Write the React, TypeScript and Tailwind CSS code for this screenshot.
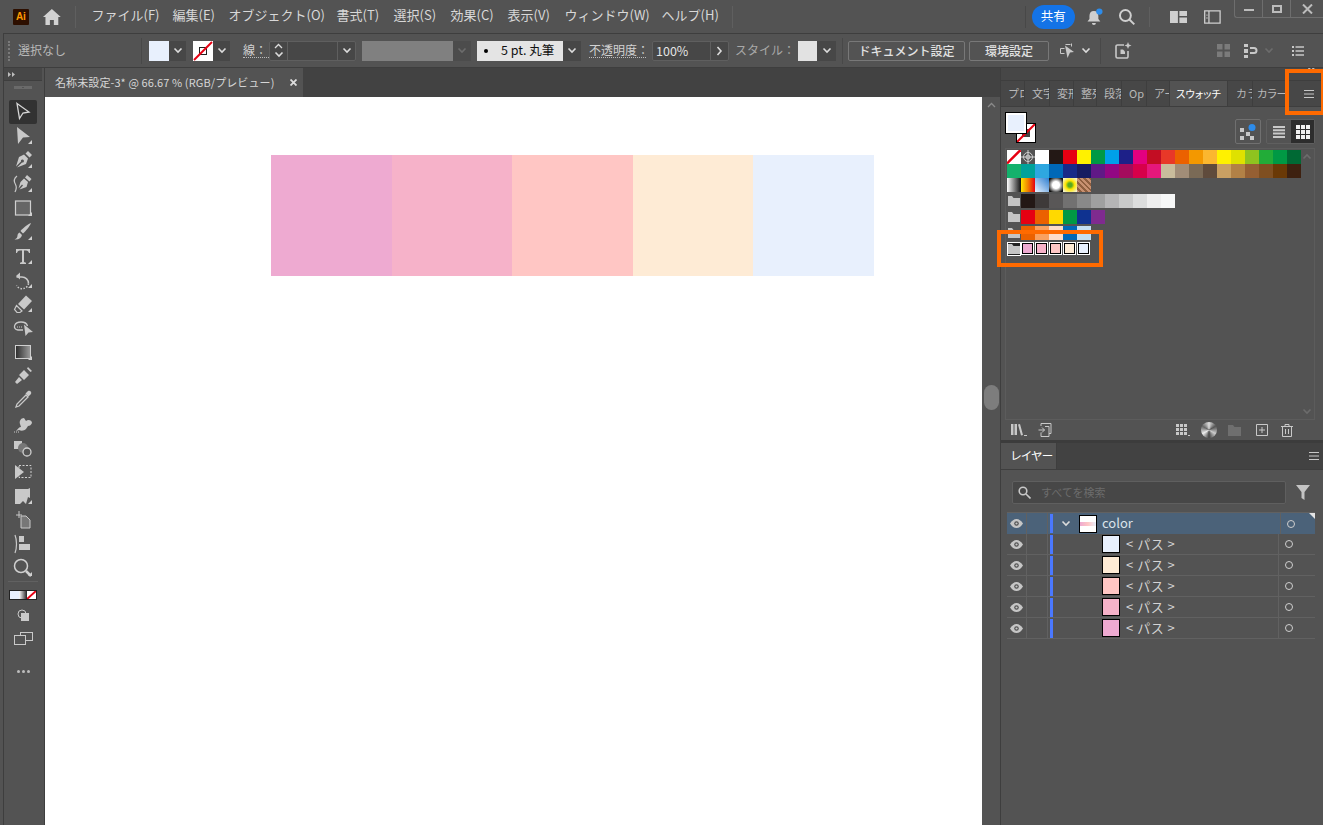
import React from 'react';

const FONT = "font-['Noto_Sans_CJK_JP','Noto_Sans',sans-serif]";

const MENU = [
  { label: 'ファイル(F)', cls: 'w-[81px]' },
  { label: '編集(E)', cls: 'w-[56px]' },
  { label: 'オブジェクト(O)', cls: 'w-[108px]' },
  { label: '書式(T)', cls: 'w-[57px]' },
  { label: '選択(S)', cls: 'w-[57px]' },
  { label: '効果(C)', cls: 'w-[57px]' },
  { label: '表示(V)', cls: 'w-[57px]' },
  { label: 'ウィンドウ(W)', cls: 'w-[97px]' },
  { label: 'ヘルプ(H)', cls: 'w-[70px]' },
];

const TABS = [
  { label: 'プロ', cls: 'w-[24px]' },
  { label: '文字', cls: 'w-[25px]' },
  { label: '変形', cls: 'w-[24px]' },
  { label: '整列', cls: 'w-[23px]' },
  { label: '段落', cls: 'w-[25px]' },
  { label: 'Op', cls: 'w-[25px]' },
  { label: 'アー', cls: 'w-[23px]' },
];

const ROW1 = ['#ffffff', '#231815', '#e60012', '#fff100', '#009944', '#00a0e9', '#1d2088', '#e4007f', '#c30d23', '#e83828', '#eb6100', '#f39800', '#fbb72f', '#fff100', '#dfe100', '#8fc31f', '#22ac38', '#009944', '#006934'];
const ROW2 = ['#14b16c', '#00a29a', '#2ea7e0', '#0068b7', '#172a88', '#171c61', '#601986', '#920783', '#a40b5d', '#d7004a', '#e5177b', '#c9bc9c', '#a18d78', '#7a6a56', '#5f4b3c', '#c9a063', '#b28146', '#955f33', '#7f4f21', '#6a3906', '#3e2110'];
const GRAYS = ['#231815', '#3e3a39', '#595757', '#727171', '#898989', '#9fa0a0', '#b5b5b6', '#c9caca', '#dcdddd', '#efefef', '#f7f8f8'];
const BRIGHTS = ['#e60012', '#eb6100', '#ffd900', '#009944', '#0f3290', '#7f2b8f'];
const TINTS = ['#eb6100', '#f9a05f', '#fddcc8', '#0068b7', '#c4dff2'];
const PALETTE = ['#eeaad1', '#f6b2c9', '#ffc6c4', '#feebd5', '#e8f0fd'];
const LAYERS = ['#e8f0fd', '#feebd5', '#ffc6c4', '#f6b2c9', '#eeaad1'];

const Chevron = ({ dim = false }: { dim?: boolean }) => (
  <svg width="10" height="7" viewBox="0 0 10 7" fill="none" stroke={dim ? '#6c6c6c' : '#dcdcdc'} strokeWidth="1.6">
    <path d="M1.5 1.5 5 5l3.5-3.5" />
  </svg>
);

const Caret = () => (
  <svg width="24" height="24" viewBox="0 0 24 24" className="absolute inset-0">
    <path d="M19 20h4v-4z" fill="#d0d0d0" />
  </svg>
);

const Tool = ({ children, caret = true, active = false }: { children: React.ReactNode; caret?: boolean; active?: boolean }) => (
  <div className={`relative h-[24px] w-[28px] flex items-center justify-center rounded-[2px] ${active ? 'bg-[#323232]' : ''}`}>
    <svg width="24" height="24" viewBox="0 0 24 24" fill="#c9c9c9" stroke="none">
      {children}
    </svg>
    {caret && <Caret />}
  </div>
);

const NoneSwatch = () => (
  <svg width="14" height="14" viewBox="0 0 14 14" className="shrink-0">
    <rect width="14" height="14" fill="#fff" />
    <path d="M0 13.5 13.5 0" stroke="#e60012" strokeWidth="2.4" />
  </svg>
);

const Folder = ({ white = false }: { white?: boolean }) => (
  <div className={`w-[14px] h-[14px] flex items-center justify-center shrink-0 ${white ? 'bg-[#222] border border-white' : ''}`}>
    <svg width="12" height="10" viewBox="0 0 12 10">
      <path d="M0 0h4l1.5 2H12v8H0z" fill="#c4c4c4" />
    </svg>
  </div>
);

const Eye = () => (
  <svg width="13" height="9" viewBox="0 0 13 9">
    <path d="M0 4.5C2 1.5 4 0 6.5 0S11 1.5 13 4.5C11 7.5 9 9 6.5 9S2 7.5 0 4.5z" fill="#c6c6c6" />
    <circle cx="6.5" cy="4.5" r="2.3" fill="#535353" />
    <circle cx="6.5" cy="4.5" r="1.1" fill="#c6c6c6" />
  </svg>
);

const Cell = ({ color }: { color: string }) => <div className="w-[14px] h-[14px] shrink-0" style={{ backgroundColor: color }} />;

const LayerRow = ({ color }: { color: string }) => (
  <div className="flex h-[21px] items-center border-b border-[#616161]">
    <div className="w-[20px] h-full flex items-center justify-center border-r border-[#616161]"><Eye /></div>
    <div className="w-[21px] h-full border-r border-[#616161]" />
    <div className="ml-[2px] w-[3px] h-[19px] bg-[#4a78ff]" />
    <div className="ml-[49px] w-[18px] h-[18px] border border-black" style={{ backgroundColor: color }} />
    <span className="ml-[6px] w-[152px] text-[13px] tracking-[0.5px] text-[#d4d4d4]">&lt; パス &gt;</span>
    <div className="h-full border-l border-[#616161] flex-1 flex items-center pl-[6px]">
      <div className="w-[8px] h-[8px] rounded-full border border-[#cfcfcf]" />
    </div>
  </div>
);

export default function App() {
  return (
    <div className={`w-[1323px] h-[825px] overflow-hidden relative bg-[#535353] text-[#d6d6d6] flex flex-col ${FONT}`}>
      {/* menu bar */}
      <header className="h-[33px] flex items-center shrink-0">
        <div className="ml-[13px] w-[16px] h-[16px] bg-[#2d0f00] rounded-[1px] flex items-center justify-center text-[#ff9a00] text-[10px] font-bold leading-none font-['Liberation_Sans',sans-serif]">Ai</div>
        <svg width="20" height="16" viewBox="0 0 20 16" className="ml-[13px]" fill="#d2d2d2">
          <path d="M10 0 19 8h-2.5v8H12v-5H8v5H3.5V8H1z" />
        </svg>
        <div className="ml-[13px] w-px h-[22px] bg-[#5f5f5f]" />
        <nav className="ml-[16px] pb-[4px] flex text-[13px] text-[#d8d8d8]">
          {MENU.map((m) => (
            <span key={m.label} className={`${m.cls} whitespace-nowrap`}>{m.label}</span>
          ))}
        </nav>
        <div className="w-px h-[22px] bg-[#5f5f5f]" />
        <div className="ml-[292px] w-px h-[22px] bg-[#484848]" />
        <div className="ml-[6px] w-[44px] h-[24px] rounded-full bg-[#1473e6] text-white text-[12.5px] flex items-center justify-center">共有</div>
        <svg width="18" height="18" viewBox="0 0 18 18" className="ml-[11px]" fill="#cfcfcf">
          <path d="M8 3c3 0 4.5 2 4.5 5v3l2 2.5h-13L3.5 11V8C3.5 5 5 3 8 3zM6 15h4a2 2 0 0 1-4 0z" />
          <circle cx="13.5" cy="3.5" r="3.2" fill="#2d8ceb" />
        </svg>
        <svg width="18" height="18" viewBox="0 0 18 18" className="ml-[14px]" fill="none" stroke="#cfcfcf" strokeWidth="2">
          <circle cx="7.5" cy="7.5" r="5.5" />
          <path d="m11.5 11.5 5 5" />
        </svg>
        <div className="ml-[13px] w-px h-[20px] bg-[#5f5f5f]" />
        <svg width="18" height="14" viewBox="0 0 18 14" className="ml-[20px]" fill="#cfcfcf">
          <path d="M0 1h8v12H0zM9.5 1H18v5H9.5zM9.5 7.5H18V13H9.5z" />
        </svg>
        <svg width="17" height="14" viewBox="0 0 17 14" className="ml-[17px]" fill="none" stroke="#cfcfcf" strokeWidth="1.3">
          <path d="M.7.7h15.6v12.6H.7zM5 1v12M2.5 5h1M2.5 8h1" />
        </svg>
        {/* window controls */}
        <div className="ml-[13px] self-start w-[90px] h-[18px] border-l border-b border-[#6e6e6e] rounded-bl-[3px] flex">
          <div className="w-[28px] flex items-center justify-center border-r border-[#6e6e6e]"><div className="w-[10px] h-[2px] mt-[3px] bg-[#bcbcbc]" /></div>
          <div className="w-[28px] flex items-center justify-center border-r border-[#6e6e6e]"><div className="w-[10px] h-[8px] border-2 border-[#bcbcbc]" /></div>
          <div className="flex-1 flex items-center justify-center">
            <svg width="11" height="10" viewBox="0 0 11 10" stroke="#bcbcbc" strokeWidth="2"><path d="m1 .5 9 9M10 .5l-9 9" /></svg>
          </div>
        </div>
      </header>

      {/* control bar */}
      <div className="h-[35px] ml-[3px] shrink-0 border-y border-l border-[#3e3e3e] flex items-center text-[12px]">
        <div className="ml-[4px] w-[2px] h-[20px] border-l-2 border-dotted border-[#7a7a7a]" />
        <span className="ml-[8px] pb-[2px] w-[123px] text-[#b9b9b9]">選択なし</span>
        <div className="w-px h-[26px] bg-[#484848]" />
        <div className="ml-[7px] flex h-[20px]">
          <div className="w-[20px] bg-[#e8f0fd]" />
          <div className="w-[17px] bg-[#474747] flex items-center justify-center"><Chevron /></div>
        </div>
        <div className="ml-[7px] flex h-[20px]">
          <svg width="20" height="20" viewBox="0 0 20 20">
            <rect width="20" height="20" fill="#fff" />
            <rect x="6.5" y="6.5" width="7" height="7" fill="none" stroke="#222" />
            <path d="M1 19 19 1" stroke="#e60012" strokeWidth="2" />
          </svg>
          <div className="w-[17px] bg-[#474747] flex items-center justify-center"><Chevron /></div>
        </div>
        <span className="ml-[13px] w-[26px] border-b border-dotted border-[#bbb] leading-[14px] text-[#d2d2d2]">線：</span>
        <div className="flex h-[20px] border border-[#5f5f5f] rounded-[2px] bg-[#474747]">
          <div className="w-[18px] border-r border-[#5f5f5f] flex flex-col items-center justify-center gap-[2px]">
            <svg width="9" height="6" viewBox="0 0 9 6" fill="none" stroke="#dcdcdc" strokeWidth="1.3"><path d="m1 5 3.500-3.500L8 5" /></svg>
            <Chevron />
          </div>
          <div className="w-[50px] border-r border-[#5f5f5f]" />
          <div className="w-[17px] flex items-center justify-center"><Chevron /></div>
        </div>
        <div className="ml-[6px] w-[91px] h-[20px] bg-[#808080]" />
        <div className="w-[18px] h-[20px] flex items-center justify-center bg-[#4c4c4c]"><Chevron dim /></div>
        <div className="ml-[6px] w-[86px] h-[20px] bg-[#e4e4e4] flex items-center text-[#111] text-[12.5px] whitespace-nowrap">
          <span className="ml-[7px] w-[4px] h-[4px] rounded-full bg-black" />
          <span className="ml-[13px]">5 pt. 丸筆</span>
        </div>
        <div className="w-[18px] h-[20px] flex items-center justify-center bg-[#474747]"><Chevron /></div>
        <span className="ml-[8px] w-[57px] border-b border-dotted border-[#bbb] leading-[14px] text-[#d2d2d2] whitespace-nowrap">不透明度：</span>
        <div className="ml-[6px] flex h-[20px] border border-[#5f5f5f] rounded-[2px] bg-[#474747]">
          <span className="w-[58px] pl-[3px] border-r border-[#5f5f5f] text-[12.5px] text-[#e4e4e4] leading-[18px]">100%</span>
          <div className="w-[17px] flex items-center justify-center">
            <svg width="7" height="10" viewBox="0 0 7 10" fill="none" stroke="#dcdcdc" strokeWidth="1.6"><path d="m1.5 1 3.500 4-3.500 4" /></svg>
          </div>
        </div>
        <span className="ml-[6px] pb-[2px] w-[63px] text-[#a8a8a8] whitespace-nowrap">スタイル：</span>
        <div className="flex h-[20px]">
          <div className="w-[19px] bg-[#e2e2e2]" />
          <div className="w-[19px] bg-[#474747] flex items-center justify-center"><Chevron /></div>
        </div>
        <div className="ml-[6px] w-px h-[26px] bg-[#484848]" />
        <div className="ml-[5px] w-[117px] h-[20px] border border-[#787878] rounded-[2px] flex items-center justify-center text-[12px] font-medium text-[#e2e2e2]">ドキュメント設定</div>
        <div className="ml-[4px] w-[80px] h-[20px] border border-[#787878] rounded-[2px] flex items-center justify-center text-[12px] font-medium text-[#e2e2e2]">環境設定</div>
        <svg width="16" height="16" viewBox="0 0 16 16" className="ml-[11px]" fill="none" stroke="#c8c8c8">
          <path d="M4.5 5.500h-4v5h4M11.500.5v3M5.500 1.500h5" />
          <path d="M5 2.500 14 9l-4 .5L7.500 15z" fill="#c8c8c8" stroke="none" />
        </svg>
        <div className="ml-[5px]"><Chevron /></div>
        <div className="ml-[9px] w-px h-[26px] bg-[#484848]" />
        <svg width="18" height="18" viewBox="0 0 18 18" className="ml-[13px]" fill="none" stroke="#c8c8c8" strokeWidth="1.6">
          <path d="M10 3H3.5A1.5 1.5 0 0 0 2 4.5v10A1.5 1.5 0 0 0 3.5 16h9a1.5 1.5 0 0 0 1.5-1.5V9" />
          <path d="M6.5 7.500h2.500l2 2v2.500h-4.500z" fill="#c8c8c8" stroke="none" />
          <path d="m14 0 1 2.500 2.500 1-2.500 1-1 2.500-1-2.500-2.500-1 2.500-1z" fill="#c8c8c8" stroke="none" />
        </svg>
        <svg width="13" height="13" viewBox="0 0 13 13" className="ml-[85px]" fill="#7b7b7b">
          <path d="M0 0h5.500v5.500H0zM7.500 0H13v5.500H7.500zM0 7.500h5.500V13H0zM7.500 7.500H13V13H7.500z" />
        </svg>
        <svg width="14" height="14" viewBox="0 0 14 14" className="ml-[14px]" fill="#c8c8c8">
          <path d="M0 0h4v3H0zM0 5h4v4H0zM0 11h4v3H0zM6 3h4a3.500 3.500 0 0 1 0 7H6V8h4a1.500 1.500 0 0 0 0-3H6z" />
        </svg>
        <div className="ml-[6px]"><Chevron dim /></div>
        <svg width="12" height="10" viewBox="0 0 12 10" className="ml-[18px]" fill="#c8c8c8">
          <path d="M0 0h2v2H0zM3.500 .3H12v1.400H3.500zM0 4h2v2H0zM3.500 4.300H12v1.400H3.500zM0 8h2v2H0zM3.500 8.300H12v1.400H3.500z" />
        </svg>
      </div>

      {/* workspace */}
      <div className="flex-1 flex min-h-0">
        {/* tools */}
        <aside className="w-[42px] ml-[3px] pr-[2px] shrink-0 border-x border-[#3e3e3e] flex flex-col items-center">
          <div className="w-full h-[13px] bg-[#474747] border-b border-[#3e3e3e] flex items-center pl-[4px]">
            <svg width="8" height="5" viewBox="0 0 8 5" fill="#bdbdbd"><path d="M0 0l3 2.500L0 5zM4 0l3 2.500L4 5z" /></svg>
          </div>
          <div className="mt-[5px] w-[18px] h-[3px] border-x-[8px] border-y border-[#6a6a6a]" />
          <div className="mt-[11px] flex flex-col">
            <Tool active caret={false}><path d="M6 3.500 18 12l-6 1-3.500 5.500z" fill="none" stroke="#d6d6d6" strokeWidth="1.3" /></Tool>
            <Tool><path d="M6 3 19 13l-7 .5L7 20z" /></Tool>
            <Tool><path d="M17 3l4 4-2.500 2.500-4-4zM13 6.500l4 4-2 5.500-9 3.500 5-5a1.500 1.500 0 1 0-1-1l-5 5L8 9z" /></Tool>
            <Tool><path d="M16 3l4.500 4-2 2.500-4.500-4zM13 6.500l4 3.500-1.500 5-7 2.500 3.500-4-1-1-3.500 4 2-6.500z" /><path d="M6 4c-4 3-3 6-1.500 8.500S5 18 4 20" fill="none" stroke="#c9c9c9" strokeWidth="1.2" /></Tool>
            <Tool><rect x="4.5" y="5" width="15" height="14" fill="#666" stroke="#d0d0d0" strokeWidth="1.2" /></Tool>
            <Tool><path d="M20 3c-1 3-5 8-8 10.500L9.500 11C12 8 17 4 20 3zM8.500 12.500 11 15c-.5 3-3.500 5-7.500 4.500 2-1 3-2 3-4 0-1.500 1-2.500 2-3z" /></Tool>
            <Tool><path d="M5 5h14v4h-1c-.4-1.500-1.200-2.500-3-2.500h-2V18l2 .7V20H9v-1.300l2-.7V6.500H9c-1.800 0-2.600 1-3 2.500H5z" /></Tool>
            <Tool><path d="M5.500 9H11a6.500 6.500 0 0 1 6.500 6.500" fill="none" stroke="#c9c9c9" strokeWidth="1.5" /><path d="M9 4.500v7L5 8z" /><path d="M17.500 15.500a6.500 6.500 0 0 1-12 2" fill="none" stroke="#c9c9c9" strokeWidth="1.5" strokeDasharray="1.5 1.5" /></Tool>
            <Tool><path d="M15 3.500 21 9l-8 8.500-6-5.500z" /><path d="m5.500 13.500 5.500 5.500-2 1.500H6L3.500 17.500z" fill="none" stroke="#c9c9c9" strokeWidth="1.2" /></Tool>
            <Tool caret={false}><path d="M12 14H7c-6-1-4-8 3-8 4 0 6 2 6.500 4" fill="none" stroke="#c9c9c9" strokeWidth="1.3" /><path d="M13 8.500 22 16l-4.500.5L14.500 20z" /><path d="M6 11h6" stroke="#c9c9c9" strokeDasharray="1 1" /></Tool>
            <div className="relative h-[24px] w-[28px] flex items-center justify-center">
              <div className="w-[16px] h-[14px] border border-[#cfcfcf] bg-[linear-gradient(90deg,#2f2f2f,#9a9a9a)]" />
              <Caret />
            </div>
            <Tool caret={false}><path d="M17 3l4 4-1.500 1-3.500-3.500zM8 11l5-5 5 5-5 5zM8 13l3 3-5 4-2-2z" /></Tool>
            <Tool caret={false}><path d="M15 7l2 2-9 9-3 1 1-3z" fill="none" stroke="#c9c9c9" strokeWidth="1.3" /><path d="M17 3c2-1 4 1 3 3l-2.500 2.500-3-3z" /></Tool>
            <Tool caret={false}><path d="M5 19c2-2 3-4 5-4l-1-3c-1-3 1-6 4-6l2 3c2-2 6-1 6 2-1 2-2 3-4 3l-2 3c-2 2-5 2-7 1z" /><path d="M3 20h5" stroke="#c9c9c9" strokeDasharray="1 1" /></Tool>
            <Tool caret={false}><rect x="3" y="5" width="8" height="8" /><circle cx="12" cy="12" r="5" fill="#777" /><circle cx="16" cy="16" r="4" fill="#535353" stroke="#d0d0d0" strokeWidth="1.3" /></Tool>
            <Tool caret={false}><path d="M4 5l9 7-9 7z" /><rect x="8" y="5.5" width="12" height="12" fill="none" stroke="#d0d0d0" strokeDasharray="2 1.5" /></Tool>
            <Tool><path d="M4 5h13l2-1v10l-2-1-2 7-3-3-3 3H4z" /></Tool>
            <Tool caret={false}><path d="M5 7h6M8 3v7" stroke="#c9c9c9" fill="none" /><path d="M10 8h5l4 4v8H10z" fill="#777" stroke="#c9c9c9" /></Tool>
            <Tool caret={false}><path d="M4 3c2 5 2 13 0 18" fill="none" stroke="#c9c9c9" strokeWidth="1.2" /><path d="M8 4h5v6H8zM8 12h11v6H8z" /></Tool>
            <Tool><circle cx="10" cy="10" r="6.5" fill="none" stroke="#d0d0d0" strokeWidth="1.5" /><path d="m15 15 5 5" stroke="#d0d0d0" strokeWidth="2.5" /></Tool>
          </div>
          <div className="mt-[1px] w-[30px] h-px bg-[#616161]" />
          <div className="mt-[8px] w-[28px] h-[10px] flex border border-[#222]">
            <div className="flex-1 bg-[#e8f0fd]" />
            <div className="flex-1 bg-[linear-gradient(90deg,#fff,#222)]" />
            <svg width="9" height="8" viewBox="0 0 9 8" className="bg-white"><path d="M0 8 9 0" stroke="#e60012" strokeWidth="2" /></svg>
          </div>
          <svg width="14" height="14" viewBox="0 0 14 14" className="mt-[8px]">
            <rect x="2" y="2" width="8" height="8" rx="4" fill="none" stroke="#c9c9c9" />
            <rect x="5" y="5" width="8" height="8" fill="#c9c9c9" />
          </svg>
          <svg width="19" height="14" viewBox="0 0 19 14" className="mt-[10px]" fill="#535353" stroke="#c9c9c9">
            <rect x="6.5" y=".5" width="12" height="8" />
            <rect x=".5" y="3.5" width="11" height="9" />
          </svg>
          <div className="mt-[24px] flex gap-[2px]">
            <div className="w-[3px] h-[3px] rounded-full bg-[#bdbdbd]" />
            <div className="w-[3px] h-[3px] rounded-full bg-[#bdbdbd]" />
            <div className="w-[3px] h-[3px] rounded-full bg-[#bdbdbd]" />
          </div>
        </aside>

        {/* document */}
        <main className="w-[955px] shrink-0 flex flex-col">
          <div className="h-[29px] bg-[#424242] flex shrink-0">
            <div className="w-[258px] bg-[#535353] flex items-center pl-[10px] text-[11px] tracking-[0.1px] text-[#d6d6d6] whitespace-nowrap">
              <span className="w-[235px]">名称未設定-3* @ 66.67 % (RGB/プレビュー)</span>
              <svg width="7" height="7" viewBox="0 0 7 7" stroke="#dcdcdc" strokeWidth="1.8"><path d="m.5.5 6 6M6.5.5l-6 6" /></svg>
            </div>
          </div>
          <div className="flex-1 flex min-h-0">
            <div className="w-[937px] bg-white pt-[58px] pl-[226px]">
              <div className="flex h-[121px] w-[603px]">
                {PALETTE.map((c) => (
                  <div key={c} className="flex-1" style={{ backgroundColor: c }} />
                ))}
              </div>
            </div>
            <div className="w-[18px] flex flex-col items-center bg-[#535353]">
              <svg width="9" height="6" viewBox="0 0 9 6" fill="none" stroke="#8a8a8a" strokeWidth="1.3" className="mt-[5px]"><path d="m1 5 3.500-3.500L8 5" /></svg>
              <div className="mt-[277px] w-[15px] h-[25px] rounded-full bg-[#7d7d7d]" />
            </div>
          </div>
        </main>

        {/* right panels */}
        <aside className="flex-1 flex flex-col border-l border-[#3e3e3e] min-w-0">
          <div className="h-[12px] bg-[#474747] shrink-0 flex justify-end pr-[8px]">
            <svg width="7" height="5" viewBox="0 0 7 5" fill="#bdbdbd"><path d="M0 0h2.500L1.500 4zM4 0h2.500L5.500 4z" /></svg>
          </div>
          <div className="h-[27px] bg-[#474747] border-y border-[#3e3e3e] flex shrink-0 text-[11px] text-[#b8b8b8]">
            {TABS.map((t) => (
              <div key={t.label} className={`${t.cls} border-r border-[#3e3e3e] pl-[7px] overflow-hidden whitespace-nowrap leading-[25px]`}>{t.label}</div>
            ))}
            <div className="w-[58px] bg-[#535353] text-white text-[10.5px] [font-feature-settings:'palt'] text-center leading-[25px] border-r border-[#3e3e3e]">スウォッチ</div>
            <div className="w-[25px] pl-[8px] overflow-hidden whitespace-nowrap leading-[25px] border-r border-[#3e3e3e]">カラ</div>
            <div className="w-[32px] pl-[4px] overflow-hidden whitespace-nowrap leading-[25px] [font-feature-settings:'palt']">カラー</div>
            <div className="flex-1 flex items-center justify-center pl-[9px]">
              <svg width="10" height="8" viewBox="0 0 10 8" fill="#c8c8c8"><path d="M0 0h10v1H0zM0 3.500h10v1H0zM0 7h10v1H0z" /></svg>
            </div>
          </div>

          {/* swatches */}
          <div className="h-[333px] shrink-0 flex flex-col">
            <div className="h-[41px] flex items-start shrink-0">
              <div className="relative ml-[5px] mt-[6px] w-[30px] h-[30px]">
                <div className="absolute left-[10px] top-[10px] w-[20px] h-[20px] border border-black bg-white">
                  <svg width="18" height="18" viewBox="0 0 18 18" className="block">
                    <rect x="5" y="5" width="8" height="8" fill="#444" />
                    <path d="M0 18 18 0" stroke="#e60012" strokeWidth="2" />
                  </svg>
                </div>
                <div className="absolute left-0 top-0 w-[20px] h-[20px] border-2 border-white outline outline-1 outline-black bg-[#e8f0fd]" />
              </div>
              <div className="ml-[199px] mt-[12px] w-[26px] h-[25px] border border-[#707070] rounded-[2px] flex items-center justify-center">
                <svg width="18" height="18" viewBox="0 0 18 18" fill="#c8c8c8">
                  <path d="M1 5h4v4H1zM7 9h4v4H7zM1 13h4v4H1zM11 13h4v4h-4z" />
                  <circle cx="13" cy="4.5" r="3.5" fill="#2d8ceb" />
                </svg>
              </div>
              <div className="ml-[5px] mt-[12px] w-[49px] h-[25px] border border-[#5f5f5f] rounded-[2px] flex">
                <div className="w-[24px] flex items-center justify-center">
                  <svg width="12" height="12" viewBox="0 0 12 12" fill="#c8c8c8"><path d="M0 0h12v2H0zM0 3.300h12v2H0zM0 6.600h12v2H0zM0 10h12v2H0z" /></svg>
                </div>
                <div className="flex-1 bg-[#2d2d2d] flex items-center justify-center">
                  <svg width="14" height="14" viewBox="0 0 14 14" fill="#f0f0f0"><path d="M0 0h4v4H0zM5 0h4v4H5zM10 0h4v4h-4zM0 5h4v4H0zM5 5h4v4H5zM10 5h4v4h-4zM0 10h4v4H0zM5 10h4v4H5zM10 10h4v4h-4z" /></svg>
                </div>
              </div>
            </div>
            <div className="relative ml-[4px] w-[310px] flex-1 border border-[#5c5c5c] pl-[1px] pt-[1px] flex flex-col">
              <div className="flex">
                <NoneSwatch />
                <svg width="14" height="14" viewBox="0 0 14 14" fill="none" stroke="#cfcfcf" className="shrink-0"><circle cx="7" cy="7" r="4.5" /><circle cx="7" cy="7" r="2" /><path d="M7 0v14M0 7h14" /></svg>
                {ROW1.map((c, i) => <Cell key={i} color={c} />)}
              </div>
              <div className="flex">{ROW2.map((c, i) => <Cell key={i} color={c} />)}</div>
              <div className="flex">
                <div className="w-[14px] h-[14px] bg-[linear-gradient(90deg,#fff,#111)]" />
                <div className="w-[14px] h-[14px] bg-[linear-gradient(90deg,#ffe600,#f08000,#e60012)]" />
                <div className="w-[14px] h-[14px] bg-[linear-gradient(45deg,#e8f2ff,#2f7fd0)]" />
                <div className="w-[14px] h-[14px] bg-[radial-gradient(circle,#ffffff_35%,#111111_85%)]" />
                <div className="w-[14px] h-[14px] bg-[radial-gradient(circle,#5aaa20_20%,#ffe600_45%,#f2f2d0_90%)]" />
                <div className="w-[14px] h-[14px] bg-[repeating-linear-gradient(45deg,#c89070_0px,#c89070_2px,#8f5f3f_2px,#8f5f3f_4px)]" />
              </div>
              <div className="flex mt-[2px]"><Folder />{GRAYS.map((c) => <Cell key={c} color={c} />)}</div>
              <div className="flex mt-[2px]"><Folder />{BRIGHTS.map((c) => <Cell key={c} color={c} />)}</div>
              <div className="flex mt-[2px]"><Folder />{TINTS.map((c) => <Cell key={c} color={c} />)}</div>
              <div className="flex mt-[2px]">
                <Folder white />
                {PALETTE.map((c) => (
                  <div key={c} className="w-[13px] h-[13px] mr-px border border-white">
                    <div className="w-full h-full border border-black" style={{ backgroundColor: c }} />
                  </div>
                ))}
              </div>
              <div className="absolute right-[2px] top-[4px] rotate-180"><Chevron dim /></div>
              <div className="absolute right-[2px] bottom-[4px]"><Chevron dim /></div>
            </div>
            <div className="h-[20px] flex items-center shrink-0 text-[#c8c8c8]">
              <svg width="16" height="14" viewBox="0 0 16 14" className="ml-[10px]" fill="#c8c8c8"><path d="M0 1h2.500v11H0zM3.500 1H6v11H3.500zM7 1.500l2-.5 3 11-2 .5zM13 12h3v1h-3z" /></svg>
              <svg width="14" height="14" viewBox="0 0 14 14" className="ml-[11px]" fill="none" stroke="#c8c8c8"><path d="M3 3V.5h10v10h-2M.5 7h6M4 4.500 6.500 7 4 9.500M3 9.500V13.500h8V3.500H7" /></svg>
              <svg width="14" height="13" viewBox="0 0 14 13" className="ml-[124px]" fill="#c8c8c8"><path d="M0 0h3v3H0zM4 0h3v3H4zM8 0h3v3H8zM0 4h3v3H0zM4 4h3v3H4zM8 4h3v3H8zM0 8h3v3H0zM4 8h3v3H4zM8 8h3v3H8zM12 11h2v1h-2z" /></svg>
              <div className="ml-[11px] w-[16px] h-[16px] rounded-full bg-[conic-gradient(#ddd,#555,#ccc,#444,#eee,#666,#ddd)]" />
              <svg width="13" height="11" viewBox="0 0 13 11" className="ml-[11px]" fill="#6f6f6f"><path d="M0 0h5l1.500 2H13v9H0z" /></svg>
              <svg width="12" height="12" viewBox="0 0 12 12" className="ml-[15px]" fill="none" stroke="#c8c8c8"><path d="M.5.5h11v11H.5zM6 3v6M3 6h6" /></svg>
              <svg width="12" height="13" viewBox="0 0 12 13" className="ml-[13px]" fill="none" stroke="#c8c8c8"><path d="M0 2.500h12M4 2.500V.5h4v2M1.500 2.500v10h9v-10M4.500 5v5M7.500 5v5" /></svg>
            </div>
          </div>

          {/* layers */}
          <div className="h-[3px] bg-[#3c3c3c] shrink-0" />
          <div className="h-[27px] bg-[#424242] border-b border-[#3e3e3e] flex shrink-0">
            <div className="w-[56px] bg-[#535353] text-white text-[11.5px] [font-feature-settings:'palt'] pl-[10px] leading-[25px] border-r border-[#3e3e3e]">レイヤー</div>
            <div className="flex-1 flex items-center justify-end pr-[4px]">
              <svg width="10" height="8" viewBox="0 0 10 8" fill="#c8c8c8"><path d="M0 0h10v1H0zM0 3.500h10v1H0zM0 7h10v1H0z" /></svg>
            </div>
          </div>
          <div className="flex-1 flex flex-col">
            <div className="h-[42px] pt-[11px] flex items-start shrink-0">
              <div className="ml-[11px] w-[274px] h-[23px] bg-[#474747] border border-[#5f5f5f] rounded-[2px] flex items-center text-[11px] text-[#6c6c6c]">
                <svg width="13" height="13" viewBox="0 0 13 13" className="ml-[5px]" fill="none" stroke="#c8c8c8" strokeWidth="1.6"><circle cx="5" cy="5" r="3.8" /><path d="m8 8 4.500 4.500" /></svg>
                <span className="ml-[10px]">すべてを検索</span>
              </div>
              <svg width="14" height="15" viewBox="0 0 14 15" className="ml-[10px] mt-[4px]" fill="#c4c4c4"><path d="M0 0h14L8.500 7v8l-3-2V7z" /></svg>
            </div>
            <div className="ml-[6px] w-[308px] border-t border-[#616161] flex flex-col">
              <div className="relative flex h-[21px] items-center bg-[#4b6279]">
                <div className="w-[20px] h-full flex items-center justify-center border-r border-[#616161]"><Eye /></div>
                <div className="w-[21px] h-full border-r border-[#616161]" />
                <div className="ml-[2px] w-[3px] h-[19px] bg-[#4a78ff]" />
                <div className="ml-[8px]"><Chevron /></div>
                <div className="ml-[8px] w-[18px] h-[18px] border border-black bg-white flex items-center">
                  <div className="w-full h-[4px] bg-[linear-gradient(90deg,#eeaad1,#ffc6c4,#e8f0fd)]" />
                </div>
                <span className="ml-[5px] w-[178px] text-[13px] pb-[2px] text-[#dbe2ea]">color</span>
                <div className="h-full border-l border-[#616161] flex-1 flex items-center pl-[6px]">
                  <div className="w-[8px] h-[8px] rounded-full border border-[#cfcfcf]" />
                </div>
                <svg width="6" height="6" viewBox="0 0 6 6" className="absolute right-0 top-0"><path d="M0 0h6v6z" fill="#e4e4e4" /></svg>
              </div>
              {LAYERS.map((c) => <LayerRow key={c} color={c} />)}
            </div>
          </div>
        </aside>
      </div>

      {/* orange callouts drawn over the UI */}
      <div className="absolute left-[1285px] top-[69px] w-[38px] h-[46px] border-[4px] border-r-[2px] border-[#ff6a00]" />
      <div className="absolute left-[997px] top-[230px] w-[106px] h-[37px] border-[4px] border-[#ff6a00]" />
    </div>
  );
}
